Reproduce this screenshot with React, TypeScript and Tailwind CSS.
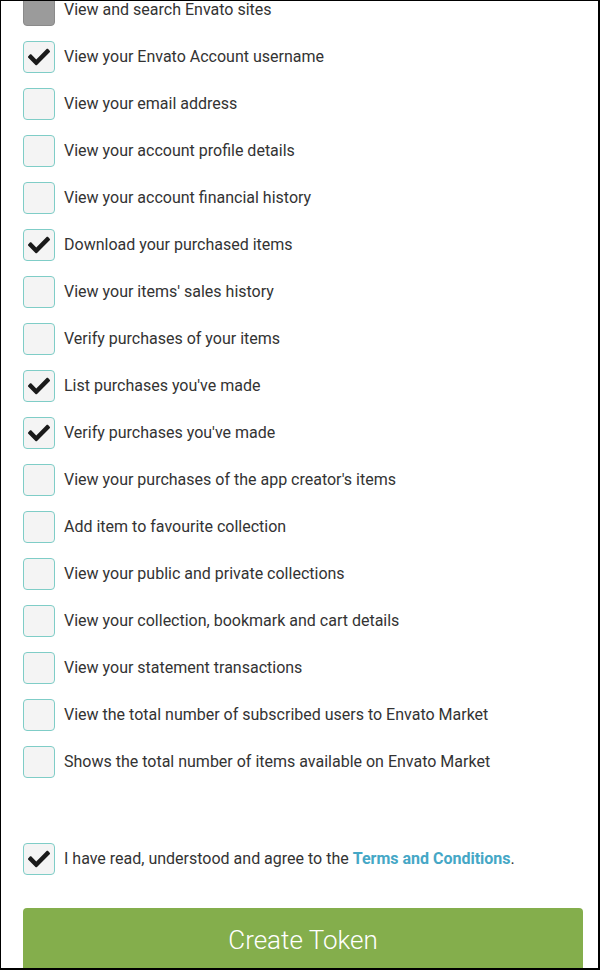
import { FaCheck } from 'react-icons/fa';

const scopes: { label: string; checked?: boolean; disabled?: boolean }[] = [
  { label: 'View and search Envato sites', disabled: true },
  { label: 'View your Envato Account username', checked: true },
  { label: 'View your email address' },
  { label: 'View your account profile details' },
  { label: 'View your account financial history' },
  { label: 'Download your purchased items', checked: true },
  { label: "View your items' sales history" },
  { label: 'Verify purchases of your items' },
  { label: "List purchases you've made", checked: true },
  { label: "Verify purchases you've made", checked: true },
  { label: "View your purchases of the app creator's items" },
  { label: 'Add item to favourite collection' },
  { label: 'View your public and private collections' },
  { label: 'View your collection, bookmark and cart details' },
  { label: 'View your statement transactions' },
  { label: 'View the total number of subscribed users to Envato Market' },
  { label: 'Shows the total number of items available on Envato Market' },
];

function Box({ checked, disabled }: { checked?: boolean; disabled?: boolean }) {
  return (
    <span
      className={
        disabled
          ? 'w-8 h-8 shrink-0 rounded-[4px] border border-[#8a8a8a] bg-[#9b9b9b] flex items-center justify-center'
          : 'w-8 h-8 shrink-0 rounded-[4px] border border-[#7fcdc7] bg-[#f4f4f4] flex items-center justify-center'
      }
    >
      {checked && <FaCheck size={22} className="text-[#1a1a1a]" />}
    </span>
  );
}

export default function App() {
  return (
    <div
      className="w-[600px] h-[970px] bg-white border-l border-t border-r-2 border-b-2 border-black overflow-hidden text-[#333333]"
      style={{ fontFamily: 'Roboto, "Liberation Sans", sans-serif' }}
    >
      <ul className="mt-[-7px] pl-[22px] pr-[15px] flex flex-col gap-[15px]">
        {scopes.map((s) => (
          <li key={s.label} className="flex items-center gap-[9px]">
            <Box checked={s.checked} disabled={s.disabled} />
            <span className="text-[16px] leading-5">{s.label}</span>
          </li>
        ))}
      </ul>

      <div className="mt-[65px] pl-[22px] pr-[15px] flex items-center gap-[9px]">
        <Box checked />
        <span className="text-[16px] leading-5">
          I have read, understood and agree to the{' '}
          <a className="font-bold text-[#45a7c6]">Terms and Conditions</a>.
        </span>
      </div>

      <div className="mt-[33px] pl-[22px] pr-[15px]">
        <button className="w-full h-[70px] bg-[#84ae4c] rounded-t-[4px] text-white text-[26px] font-light pb-[6px]">
          Create Token
        </button>
      </div>
    </div>
  );
}
